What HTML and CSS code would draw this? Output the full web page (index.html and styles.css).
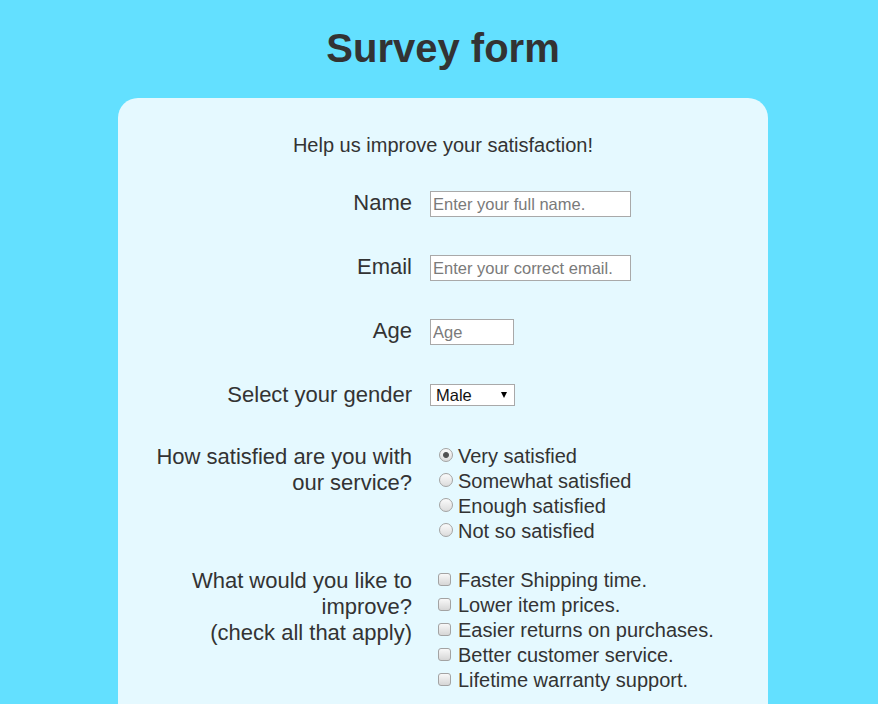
FILE: index.html
```html
<!DOCTYPE html>
<html lang="en">
<head>
<meta charset="utf-8">
<title>Survey form</title>
<link rel="stylesheet" href="styles.css">
</head>
<body>
<div class="page">
  <h1 class="title">Survey form</h1>
  <form class="card">
    <p class="intro">Help us improve your satisfaction!</p>

    <div class="row">
      <label class="label" for="name">Name</label>
      <div class="control"><input class="text-input wide" id="name" type="text" placeholder="Enter your full name."></div>
    </div>

    <div class="row">
      <label class="label" for="email">Email</label>
      <div class="control"><input class="text-input wide" id="email" type="email" placeholder="Enter your correct email."></div>
    </div>

    <div class="row">
      <label class="label" for="age">Age</label>
      <div class="control"><input class="text-input narrow" id="age" type="number" placeholder="Age"></div>
    </div>

    <div class="row row-select">
      <label class="label" for="gender">Select your gender</label>
      <div class="control">
        <div class="select-wrap">
          <select class="select" id="gender">
            <option>Male</option>
            <option>Female</option>
          </select>
          <span class="select-arrow"></span>
        </div>
      </div>
    </div>

    <div class="row row-radio">
      <div class="label">How satisfied are you with our service?</div>
      <div class="control options">
        <label class="option"><input class="radio" type="radio" name="sat" checked>Very satisfied</label>
        <label class="option"><input class="radio" type="radio" name="sat">Somewhat satisfied</label>
        <label class="option"><input class="radio" type="radio" name="sat">Enough satisfied</label>
        <label class="option"><input class="radio" type="radio" name="sat">Not so satisfied</label>
      </div>
    </div>

    <div class="row row-check">
      <div class="label">What would you like to improve?<br>(check all that apply)</div>
      <div class="control options">
        <label class="option"><input class="check" type="checkbox">Faster Shipping time.</label>
        <label class="option"><input class="check" type="checkbox">Lower item prices.</label>
        <label class="option"><input class="check" type="checkbox">Easier returns on purchases.</label>
        <label class="option"><input class="check" type="checkbox">Better customer service.</label>
        <label class="option"><input class="check" type="checkbox">Lifetime warranty support.</label>
      </div>
    </div>
  </form>
</div>
</body>
</html>
```

FILE: styles.css
```css
html, body {
  margin: 0;
  padding: 0;
}

body {
  background: #63e0ff;
  font-family: "Liberation Sans", Arial, sans-serif;
  color: #333333;
}

.page {
  padding-left: 8px;
}

.title {
  margin: 25px 0 27px;
  font-size: 40px;
  line-height: 46px;
  font-weight: bold;
  text-align: center;
  color: #333333;
}

.card {
  width: 650px;
  margin: 0 auto;
  background: #e5f9ff;
  border-radius: 20px;
  padding: 36px 0 60px;
  box-sizing: border-box;
}

.intro {
  margin: 0 0 33px;
  font-size: 20px;
  line-height: 23px;
  text-align: center;
}

.row {
  display: flex;
  align-items: flex-start;
  gap: 17px;
  margin-bottom: 37px;
}

.row-select {
  margin-bottom: 36px;
}

.row-radio {
  margin-bottom: 24px;
}

.label {
  flex: 0 0 294px;
  box-sizing: border-box;
  padding-left: 20px;
  text-align: right;
  font-size: 22px;
  line-height: 26px;
}

.control {
  flex: 1;
  margin-left: 1px;
}

.text-input {
  display: block;
  margin-top: 1px;
  height: 26px;
  box-sizing: border-box;
  border: 1px solid #a9a9a9;
  background: #ffffff;
  padding: 0 2px;
  font-family: "Liberation Sans", Arial, sans-serif;
  font-size: 16.5px;
  color: #333333;
  outline: none;
}

.text-input::placeholder {
  color: #7a7a7a;
}

.text-input::-webkit-outer-spin-button,
.text-input::-webkit-inner-spin-button {
  -webkit-appearance: none;
  margin: 0;
}

.wide {
  width: 201px;
}

.narrow {
  width: 84px;
  -moz-appearance: textfield;
}

.select-wrap {
  position: relative;
  width: 85px;
  margin-top: 2px;
}

.select {
  -webkit-appearance: none;
  appearance: none;
  display: block;
  width: 85px;
  height: 22px;
  box-sizing: border-box;
  border: 1px solid #a9a9a9;
  border-radius: 0;
  background: #ffffff;
  padding: 0 0 0 5px;
  font-family: "Liberation Sans", Arial, sans-serif;
  font-size: 16.5px;
  color: #111111;
  outline: none;
}

.select-arrow {
  position: absolute;
  right: 8px;
  top: 8px;
  width: 0;
  height: 0;
  border-left: 3.5px solid transparent;
  border-right: 3.5px solid transparent;
  border-top: 6px solid #000000;
  pointer-events: none;
}

.options {
  display: flex;
  flex-direction: column;
}

.option {
  display: flex;
  align-items: center;
  font-size: 20px;
  line-height: 25px;
  height: 25px;
}

.radio {
  -webkit-appearance: none;
  appearance: none;
  width: 14px;
  height: 14px;
  margin: -3px 5px 0 9px;
  border: 1px solid #a3a3a3;
  border-radius: 50%;
  box-sizing: border-box;
  background: linear-gradient(#fbfbfb, #dcdcdc);
  flex: 0 0 auto;
}

.radio:checked {
  background: radial-gradient(circle, #4d4d4d 0, #555555 2.5px, transparent 3.5px), linear-gradient(#fbfbfb, #dcdcdc);
}

.check {
  -webkit-appearance: none;
  appearance: none;
  width: 13px;
  height: 13px;
  margin: -2px 7px 0 8px;
  border: 1px solid #a3a3a3;
  border-radius: 3px;
  box-sizing: border-box;
  background: linear-gradient(#f8f8f8, #d6d6d6);
  flex: 0 0 auto;
}
```
